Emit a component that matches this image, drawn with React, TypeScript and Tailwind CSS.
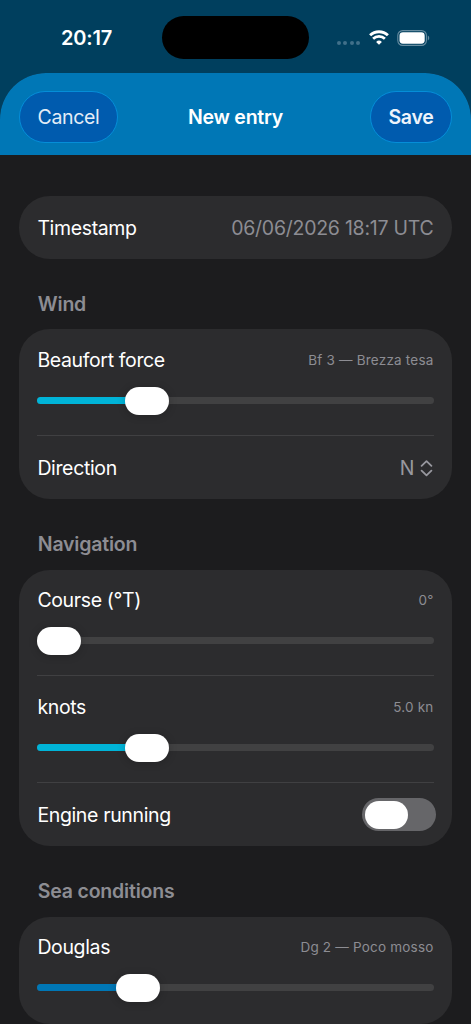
import type { ReactNode } from "react";

function StatusBar() {
  return (
    <div className="relative flex h-[72.5px] items-center justify-between pr-[41px] pl-[61px] pt-[3px]">
      <span className="text-[20px] font-semibold tracking-[-0.2px]">20:17</span>
      <div className="absolute top-[16px] left-[162px] h-[43px] w-[147px] rounded-full bg-black" />
      <div className="flex items-center">
        <div className="mt-[10px] mr-[8.5px] flex gap-[2.3px]">
          {[0, 1, 2, 3].map((dot) => (
            <span key={dot} className="size-[4px] rounded-full bg-[#40708a]" />
          ))}
        </div>
        <svg width="20" height="15" viewBox="0 0 20 15" fill="none" stroke="#fff" className="mr-[8.5px]">
          <path d="M1.1 5.3A12.8 12.8 0 0 1 18.9 5.3" strokeWidth="2.9" />
          <path d="M4.1 8.7A8.4 8.4 0 0 1 15.9 8.7" strokeWidth="2.7" />
          <path d="M10 14.8 7.1 11.9A4.2 4.2 0 0 1 12.9 11.9Z" fill="#fff" stroke="none" />
        </svg>
        <svg width="33" height="16" viewBox="0 0 33 16" fill="none">
          <rect x="0.8" y="0.6" width="28.6" height="14.8" rx="4.8" stroke="#668ca0" strokeWidth="1.1" />
          <rect x="2.5" y="2.3" width="25.2" height="11.4" rx="3.4" fill="#fff" />
          <path d="M30.8 5.6c1.9.8 1.9 4 0 4.8Z" fill="#668ca0" />
        </svg>
      </div>
    </div>
  );
}

function Section({ title, children }: { title: string; children: ReactNode }) {
  return (
    <section>
      <h2 className="mt-[33px] mb-[13.7px] pl-[18.8px] text-[19.5px] leading-[24px] font-semibold tracking-[-0.2px] text-[#8d8d93]">
        {title}
      </h2>
      <Card>{children}</Card>
    </section>
  );
}

function Card({ children }: { children: ReactNode }) {
  return <div className="rounded-[31px] bg-[#2c2c2e] pr-[18.5px] pl-[18.4px]">{children}</div>;
}

function Row({ label, children }: { label: string; children: ReactNode }) {
  return (
    <div className="flex h-[63px] items-center justify-between pt-[2px]">
      <span>{label}</span>
      {children}
    </div>
  );
}

type SliderRowProps = {
  label: string;
  value: string;
  offset: number;
  fill?: string;
  divider?: boolean;
};

function SliderRow({ label, value, offset, fill = "bg-[#00b4d8]", divider = true }: SliderRowProps) {
  return (
    <div
      className={`flex h-[106.7px] flex-col border-b pt-[19px] ${divider ? "border-[#404042]" : "border-transparent"}`}
    >
      <div className="flex h-[24px] items-center justify-between">
        <span>{label}</span>
        <span className="pb-px text-[13.5px] tracking-[0.2px] text-[#8d8d93]">{value}</span>
      </div>
      <div className="relative mt-[14px] flex h-[28px] items-center">
        <div className="h-[7px] w-full overflow-hidden rounded-full bg-[#414142]">
          <div className={`h-full ${fill}`} style={{ width: offset ? offset + 22 : 0 }} />
        </div>
        <div
          className="absolute top-[0.3px] h-[28px] w-[44px] rounded-full bg-white shadow-[0_1px_8px_rgba(0,0,0,0.2)]"
          style={{ left: offset }}
        />
      </div>
    </div>
  );
}

export default function App() {
  return (
    <div className="h-[1024px] w-[471px] overflow-hidden bg-[#003f5e] font-['Inter',sans-serif] text-white">
      <StatusBar />
      <div className="h-[951.5px] overflow-hidden rounded-t-[46px] bg-[#1c1c1e]">
        <header className="flex h-[82px] items-center justify-between bg-[#0077b6] px-[19px] pt-[7px]">
          <button className="h-[52px] w-[99px] rounded-full border border-[#058ed8] bg-[#005bae] pt-px text-[19.5px] tracking-[-0.35px] text-[#e3edf7]">
            Cancel
          </button>
          <h1 className="mr-[17px] pt-px text-[19.5px] font-semibold tracking-[-0.25px]">New entry</h1>
          <button className="h-[52px] w-[82px] rounded-full border border-[#058ed8] bg-[#005bae] pt-px text-[19.5px] font-semibold tracking-[-0.25px] text-[#eef4fb]">
            Save
          </button>
        </header>

        <main className="px-[19px] pt-[41.2px] text-[19.5px] tracking-[-0.36px]">
          <Card>
            <Row label="Timestamp">
              <span className="tracking-[-0.25px] text-[#8d8d93]">06/06/2026 18:17 UTC</span>
            </Row>
          </Card>

          <Section title="Wind">
            <SliderRow label="Beaufort force" value="Bf 3 — Brezza tesa" offset={87.6} />
            <Row label="Direction">
              <span className="flex items-center gap-[5.5px] pr-px text-[#98989f]">
                N
                <svg
                  width="13"
                  height="17"
                  viewBox="0 0 13 17"
                  fill="none"
                  stroke="currentColor"
                  strokeWidth="1.8"
                  strokeLinecap="round"
                  strokeLinejoin="round"
                >
                  <path d="M1.6 5.8 6.5 1.1 11.4 5.8M1.6 10.6 6.5 15.3 11.4 10.6" />
                </svg>
              </span>
            </Row>
          </Section>

          <Section title="Navigation">
            <SliderRow label="Course (°T)" value="0°" offset={0} />
            <SliderRow label="knots" value="5.0 kn" offset={87.6} />
            <Row label="Engine running">
              <div className="mr-[-2.5px] mb-[2px] flex h-[33px] w-[74px] items-center rounded-full bg-[#666669] pl-[2.5px]">
                <div className="h-[28px] w-[43.5px] rounded-full bg-white" />
              </div>
            </Row>
          </Section>

          <Section title="Sea conditions">
            <SliderRow
              label="Douglas"
              value="Dg 2 — Poco mosso"
              offset={78.4}
              fill="bg-[#0077b6]"
              divider={false}
            />
          </Section>
        </main>
      </div>
    </div>
  );
}
